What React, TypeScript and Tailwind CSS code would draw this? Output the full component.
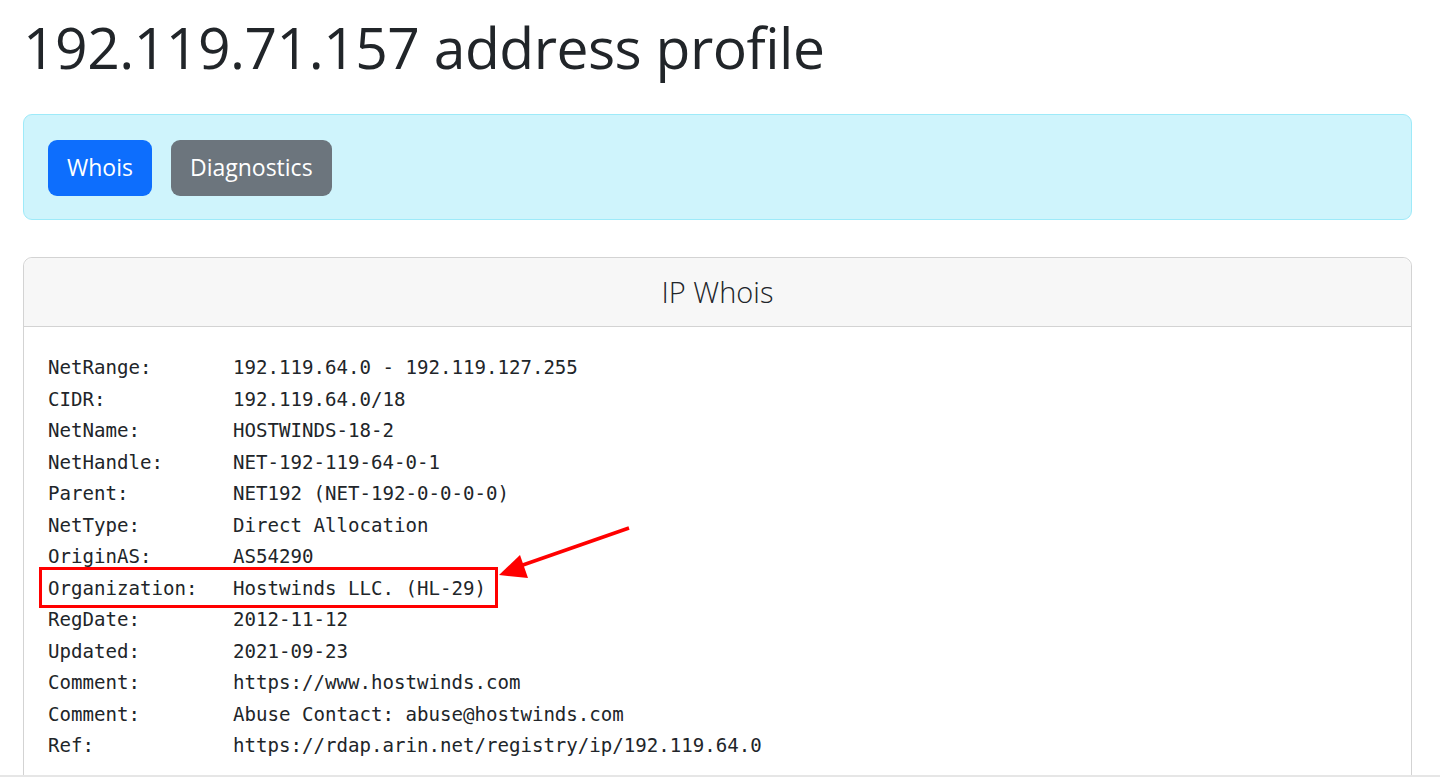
import React from "react";

const rows: [string, string][] = [
  ["NetRange:", "192.119.64.0 - 192.119.127.255"],
  ["CIDR:", "192.119.64.0/18"],
  ["NetName:", "HOSTWINDS-18-2"],
  ["NetHandle:", "NET-192-119-64-0-1"],
  ["Parent:", "NET192 (NET-192-0-0-0-0)"],
  ["NetType:", "Direct Allocation"],
  ["OriginAS:", "AS54290"],
  ["Organization:", "Hostwinds LLC. (HL-29)"],
  ["RegDate:", "2012-11-12"],
  ["Updated:", "2021-09-23"],
  ["Comment:", "https://www.hostwinds.com"],
  ["Comment:", "Abuse Contact: abuse@hostwinds.com"],
  ["Ref:", "https://rdap.arin.net/registry/ip/192.119.64.0"],
];

export default function App() {
  return (
    <div
      className="relative flex h-[777px] flex-col overflow-hidden bg-white text-[#212529]"
      style={{ fontFamily: '"Open Sans", "Noto Sans", sans-serif' }}
    >
      <div className="flex-1 overflow-hidden">
        <div className="ml-[23px] w-[1389px]">
          <h1 className="mt-[11px] mb-[31px] text-[57px] leading-[72px] font-normal tracking-[-0.5px]">
            192.119.71.157 address profile
          </h1>

          <div className="flex gap-[19px] rounded-[9px] border-[1.5px] border-[#9eeaf9] bg-[#cff4fc] px-[24px] pt-[24.5px] pb-[23.5px]">
            <button className="h-[56px] rounded-[9px] bg-[#0d6efd] px-[19px] text-[23px] text-white">
              Whois
            </button>
            <button className="h-[56px] rounded-[9px] bg-[#6c757d] px-[19px] text-[23px] text-white">
              Diagnostics
            </button>
          </div>

          <div className="mt-[37px] rounded-[9px] border-[1.5px] border-[#d3d3d3]">
            <div className="flex h-[69px] items-center justify-center rounded-t-[9px] border-b-[1.5px] border-[#d3d3d3] bg-[#f7f7f7]">
              <span className="text-[29px] font-light">IP Whois</span>
            </div>
            <div className="px-[24px] pt-[25px] pb-[24px]">
              <div
                className="text-[19.1px] leading-[31.5px] whitespace-pre"
                style={{ fontFamily: '"DejaVu Sans Mono", "Liberation Mono", monospace' }}
              >
                {rows.map(([k, v], i) => (
                  <div key={i} className="flex">
                    <span className="w-[185px] shrink-0">{k}</span>
                    <span>{v}</span>
                  </div>
                ))}
              </div>
            </div>
          </div>
        </div>
      </div>
      <div className="h-[2px] bg-[#e6e6e6]" />

      {/* annotation box */}
      <div className="pointer-events-none absolute left-[39px] top-[567px] h-[41px] w-[459px] border-[3px] border-[#ff0000]" />
      {/* annotation arrow */}
      <svg
        className="pointer-events-none absolute left-0 top-0"
        width="1440"
        height="777"
        viewBox="0 0 1440 777"
      >
        <line x1="629" y1="528" x2="520" y2="566" stroke="#ff0000" strokeWidth="3.5" />
        <polygon points="499,575 520,555 528,578" fill="#ff0000" />
      </svg>
    </div>
  );
}
